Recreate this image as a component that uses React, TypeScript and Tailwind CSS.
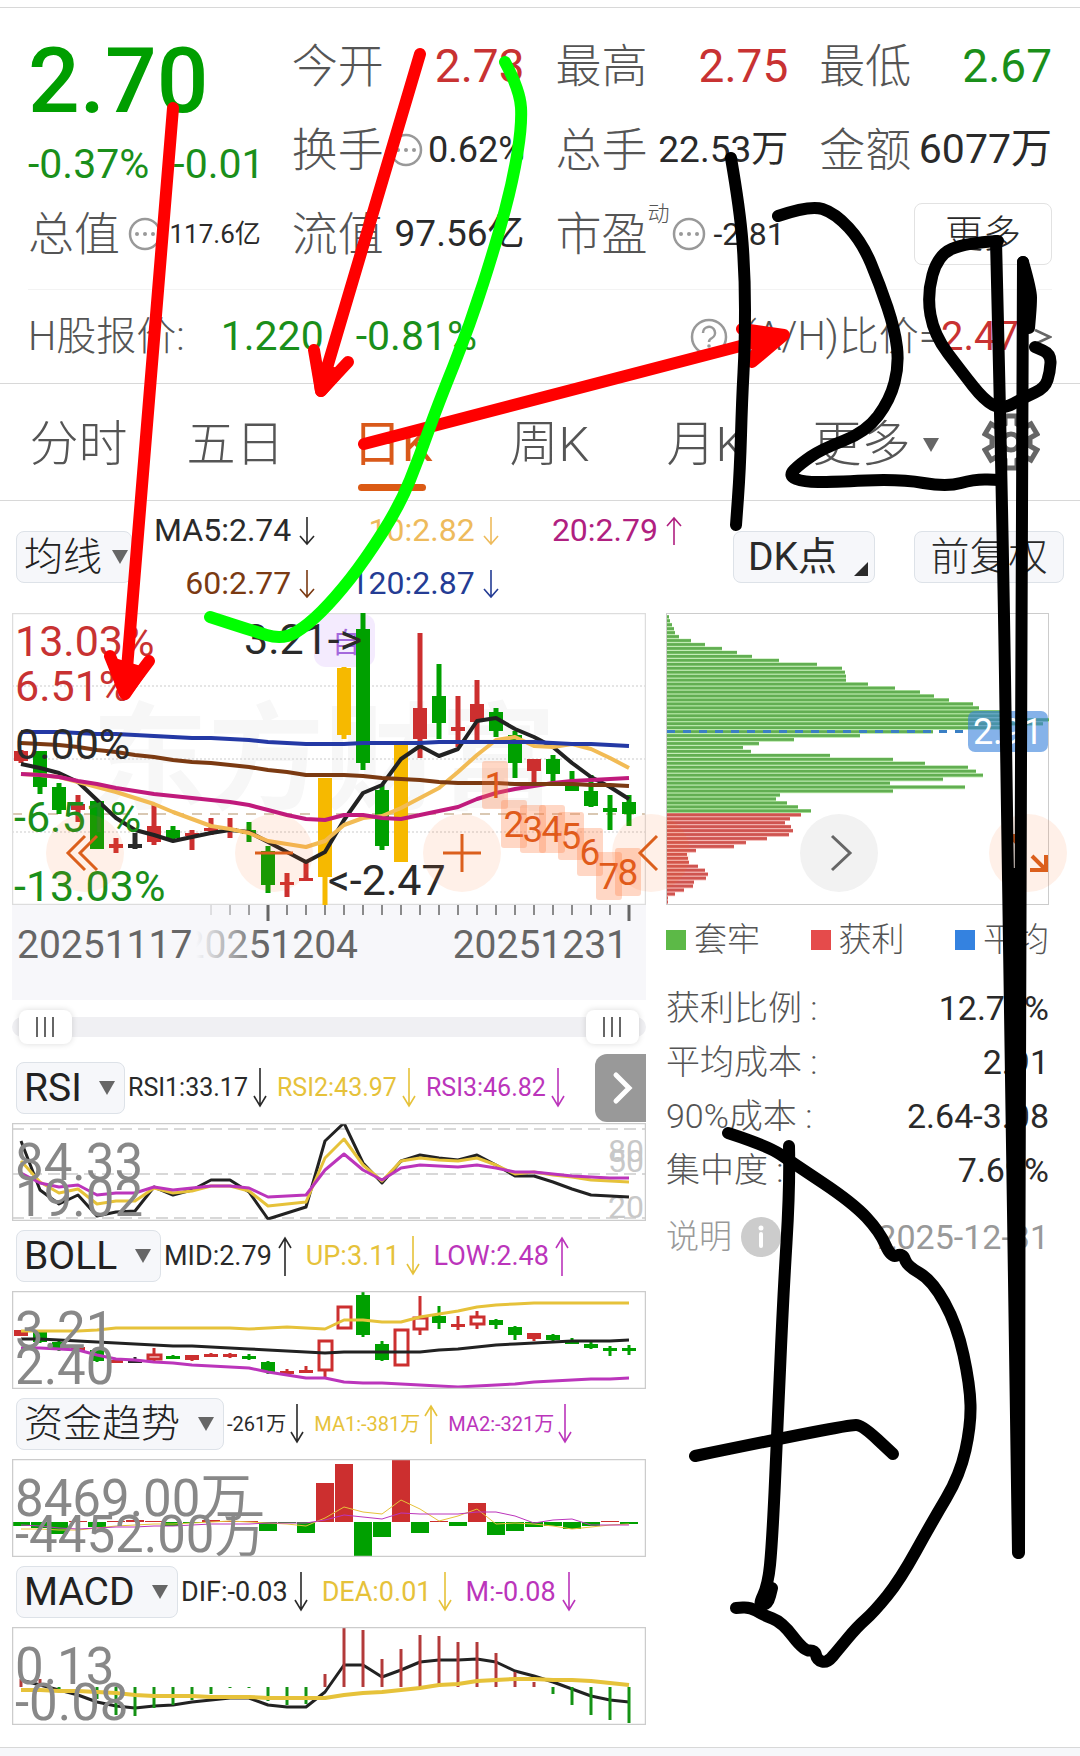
import React, { useState } from "react";

type Candle = [string, number, number, number, number];
type Point = [number, number];

const RED = "#cc2f2f";
const GREEN = "#00a000";
const GOLD = "#f6b900";
const INK = "#2a2a2a";
const YELLOW = "#e6c23a";
const PURPLE = "#bb35bb";

// every chart shares the same 33 trading days, 19px apart
const dayX = (i: number) => 9 + i * 19;

const linePoints = (ys: number[]) => ys.map((y, i) => `${dayX(i)},${y}`).join(" ");

// quadratic curve through the midpoints of the given points
const smoothPath = (pts: Point[]) => {
  let d = `M${pts[0][0]} ${pts[0][1]}`;
  for (let i = 1; i < pts.length - 1; i++) {
    const [x, y] = pts[i];
    const [nx, ny] = pts[i + 1];
    d += ` Q${x} ${y} ${(x + nx) / 2} ${(y + ny) / 2}`;
  }
  const last = pts[pts.length - 1];
  return `${d} L${last[0]} ${last[1]}`;
};

// [color, high, body top, body bottom, low]
const dayCandles: Candle[] = [
  [RED, 137, 138, 148, 150],
  [GREEN, 138, 138, 174, 181],
  [GREEN, 170, 174, 197, 201],
  [RED, 182, 191, 197, 209],
  [GREEN, 187, 188, 236, 236],
  [RED, 225, 231, 235, 240],
  [INK, 220, 231, 235, 236],
  [RED, 192, 213, 229, 232],
  [GREEN, 213, 217, 225, 226],
  [RED, 217, 220, 223, 237],
  [RED, 205, 215, 217, 222],
  [RED, 205, 215, 217, 225],
  [GREEN, 209, 217, 221, 229],
  [GREEN, 233, 238, 272, 280],
  [RED, 260, 269, 272, 284],
  [RED, 249, 265, 268, 268],
  [GOLD, 165, 165, 264, 292],
  [GOLD, 54, 55, 122, 126],
  [GREEN, 0, 16, 150, 157],
  [GREEN, 172, 177, 233, 237],
  [GOLD, 132, 132, 249, 249],
  [RED, 20, 95, 126, 145],
  [GREEN, 51, 83, 110, 126],
  [RED, 83, 114, 118, 134],
  [RED, 67, 91, 109, 127],
  [GREEN, 95, 99, 118, 124],
  [GREEN, 118, 122, 150, 165],
  [RED, 146, 146, 158, 169],
  [GREEN, 142, 146, 161, 169],
  [GREEN, 158, 170, 178, 178],
  [GREEN, 162, 178, 193, 194],
  [GREEN, 182, 195, 199, 217],
  [GREEN, 182, 189, 201, 213],
];

const ma5 = [151, 155, 160, 169, 187, 205, 217, 222, 228, 224, 220, 217, 219, 229, 239, 249, 239, 207, 180, 172, 146, 133, 143, 136, 108, 105, 116, 124, 134, 150, 164, 174, 186];
const ma10 = [161, 162, 164, 169, 174, 179, 185, 191, 199, 206, 213, 216, 220, 228, 231, 234, 228, 212, 205, 203, 195, 185, 175, 159, 142, 127, 124, 133, 134, 131, 136, 145, 155];
const ma20 = [161, 162, 164, 168, 171, 175, 178, 181, 183, 185, 187, 189, 192, 197, 202, 206, 207, 202, 202, 205, 206, 202, 198, 194, 186, 180, 176, 173, 170, 168, 167, 166, 165];
const ma60 = [130, 131, 132, 134, 137, 139, 142, 144, 147, 149, 150, 152, 154, 157, 159, 162, 162, 162, 163, 165, 166, 167, 169, 170, 170, 170, 171, 171, 171, 171, 172, 172, 173];
const ma120 = [119, 119, 119, 120, 121, 121, 122, 123, 124, 125, 125, 126, 127, 129, 130, 131, 131, 131, 130, 130, 130, 130, 129, 129, 129, 129, 129, 129, 130, 131, 131, 132, 133];

const countMarks = [148, 187, 192, 192, 199, 215, 239, 235];

const rsi1 = [18, 67, 81, 72, 93, 89, 88, 64, 72, 67, 57, 57, 69, 96, 90, 84, 18, 0, 40, 60, 38, 32, 35, 37, 32, 42, 53, 53, 59, 66, 72, 73, 74];
const rsi2 = [38, 59, 70, 66, 81, 78, 78, 65, 70, 68, 63, 63, 68, 83, 81, 79, 35, 16, 42, 58, 38, 35, 37, 38, 35, 42, 51, 49, 52, 54, 57, 58, 59];
const rsi3 = [50, 60, 64, 62, 72, 70, 70, 64, 67, 65, 63, 63, 65, 74, 73, 72, 47, 31, 47, 57, 45, 42, 43, 44, 42, 45, 49, 49, 51, 53, 54, 55, 55];

const bollCandles: Candle[] = [
  [RED, 39, 39, 45, 45],
  [GREEN, 41, 41, 51, 52],
  [GREEN, 50, 51, 58, 60],
  [RED, 54, 56, 60, 61],
  [GREEN, 59, 59, 70, 71],
  [RED, 67, 69, 71, 72],
  [INK, 66, 69, 71, 72],
  [RED, 57, 63, 69, 70],
  [GREEN, 64, 65, 67, 68],
  [RED, 64, 64, 69, 70],
  [RED, 62, 63, 66, 66],
  [RED, 62, 63, 66, 67],
  [GREEN, 63, 65, 67, 69],
  [GREEN, 70, 71, 81, 83],
  [RED, 78, 80, 83, 85],
  [RED, 75, 79, 82, 82],
  [RED, 49, 49, 80, 86],
  [RED, 15, 15, 38, 38],
  [GREEN, 0, 4, 44, 46],
  [GREEN, 50, 53, 69, 70],
  [RED, 38, 38, 75, 75],
  [RED, 5, 26, 39, 44],
  [GREEN, 15, 25, 32, 38],
  [RED, 25, 33, 36, 39],
  [RED, 20, 25, 34, 38],
  [GREEN, 28, 29, 34, 38],
  [GREEN, 35, 36, 44, 49],
  [RED, 42, 42, 48, 50],
  [GREEN, 43, 44, 49, 50],
  [GREEN, 47, 50, 52, 53],
  [GREEN, 49, 53, 57, 58],
  [GREEN, 55, 57, 60, 65],
  [GREEN, 54, 57, 60, 64],
];
const hollowDays = [7, 16, 17, 20, 21, 24];
const bollUp = [40, 40, 40, 40, 39, 37, 37, 37, 37, 37, 37, 37, 38, 37, 36, 37, 38, 29, 29, 31, 31, 26, 23, 20, 16, 14, 13, 12, 12, 12, 12, 12, 12];
const bollMid = [48, 48, 49, 50, 51, 52, 53, 54, 55, 55, 56, 57, 58, 59, 60, 61, 62, 61, 61, 61, 61, 61, 59, 58, 56, 54, 53, 52, 51, 50, 50, 50, 49];
const bollLow = [57, 57, 58, 59, 64, 68, 69, 71, 72, 74, 75, 76, 77, 81, 84, 87, 87, 91, 92, 92, 93, 94, 95, 96, 95, 94, 93, 91, 90, 89, 88, 88, 87];

const funds = [-4, -6, -12, 1, -5, 1, 2, 1, -4, -1, 2, 1, 1, -9, -1, -11, 39, 58, -34, -15, 63, -11, 1, -4, 19, -13, -9, -5, -4, -7, -4, 1, -2];
const fundMa1 = [70, 70, 71, 71, 69, 67, 66, 65, 65, 64, 63, 62, 63, 64, 65, 67, 59, 48, 53, 55, 41, 50, 62, 57, 50, 65, 64, 65, 67, 70, 68, 66, 65];
const fundMa2 = [66, 67, 69, 70, 69, 68, 68, 67, 67, 66, 65, 65, 65, 64, 64, 64, 61, 56, 58, 60, 54, 55, 55, 55, 53, 53, 57, 64, 61, 60, 66, 66, 66];

const macd = [8, 8, -2, -1, -12, -28, -29, -21, -18, -13, -7, -1, -1, -14, -18, -17, 13, 60, 57, 28, 38, 52, 51, 45, 45, 34, 15, 5, -7, -18, -28, -33, -36];
const dif = [53, 58, 63, 68, 75, 79, 81, 79, 78, 75, 73, 71, 71, 78, 80, 80, 65, 38, 38, 50, 43, 35, 33, 33, 32, 35, 44, 49, 55, 62, 69, 73, 75];
const dea = [63, 63, 64, 64, 65, 66, 68, 69, 69, 69, 70, 70, 70, 71, 71, 71, 71, 68, 66, 65, 63, 61, 58, 57, 54, 53, 52, 52, 53, 53, 54, 56, 58];

const lossChips = [2, 3, 5, 7, 8, 12, 24, 38, 55, 70, 85, 112, 150, 175, 178, 179, 179, 201, 228, 253, 267, 282, 306, 312, 333, 342, 382, 376, 344, 266, 193, 127, 92, 76, 84, 163, 226, 258, 301, 309, 316, 276, 223, 298, 226, 113, 109, 120, 131, 144];
const gainChips = [134, 123, 118, 124, 126, 122, 100, 79, 67, 29, 20, 21, 22, 31, 38, 41, 39, 27, 26, 17, 8, 1, 1];

const inkStrokes: Point[][] = [
  [[731, 158], [740, 210], [745, 275], [745, 345], [742, 400], [740, 470], [736, 525]],
  [[778, 216], [810, 205], [835, 213], [862, 242], [880, 285], [895, 330], [899, 365], [890, 400], [866, 432], [822, 449], [800, 464], [788, 476], [804, 482], [832, 482], [900, 479], [947, 487], [975, 479], [1000, 480]],
  [[998, 241], [965, 243], [938, 255], [927, 295], [934, 335], [962, 372], [984, 400], [1002, 410], [1025, 397], [1045, 388], [1050, 372], [1051, 354], [1035, 347]],
  [[996, 241], [1002, 483], [1008, 870], [1018, 1553]],
  [[1023, 262], [1022, 620], [1020, 900], [1019, 1553]],
  [[1023, 262], [1031, 290], [1031, 305], [1029, 328]],
  [[728, 1133], [768, 1146], [793, 1163], [853, 1203], [880, 1232], [891, 1258], [903, 1253], [907, 1266], [932, 1280], [957, 1325], [970, 1385], [971, 1425], [960, 1475], [932, 1522], [900, 1580], [874, 1612], [857, 1627], [838, 1650], [827, 1663], [817, 1660], [815, 1650], [804, 1651], [782, 1622], [763, 1615], [750, 1607], [736, 1608]],
  [[789, 1146], [790, 1185], [783, 1300], [777, 1440], [772, 1545], [768, 1585], [758, 1606], [768, 1604], [772, 1588]],
  [[695, 1456], [773, 1440], [850, 1425], [862, 1425], [893, 1454]],
];

const greenStroke: Point[] = [
  [505, 62], [520, 90], [522, 125], [513, 180], [497, 240], [470, 325], [437, 407], [420, 455], [400, 505], [365, 560], [335, 598], [308, 625], [283, 640], [250, 630], [210, 617],
];

const Arrow = ({ up, tall }: { up?: boolean; tall?: boolean }) => (
  <svg
    viewBox={tall ? "0 0 14 40" : "0 0 16 30"}
    className={`shrink-0 ${tall ? "w-[14px] h-10" : "w-4 h-[30px]"} ${up ? "rotate-180" : ""}`}
    fill="none"
    stroke="currentColor"
    strokeWidth="1.6"
    aria-hidden="true"
  >
    <path d={tall ? "M7 0V38M1 28L7 38L13 28" : "M8 1V28M1 20L8 28L15 20"} />
  </svg>
);

const MoreDots = () => (
  <svg viewBox="0 0 34 34" className="size-[34px] shrink-0" aria-hidden="true">
    <circle cx="17" cy="17" r="15" fill="none" stroke="#999" strokeWidth="2.5" />
    <circle cx="9" cy="17" r="2" fill="#999" />
    <circle cx="17" cy="17" r="2" fill="#999" />
    <circle cx="25" cy="17" r="2" fill="#999" />
  </svg>
);

const Triangle = () => (
  <svg viewBox="0 0 16 14" className="w-4 h-[14px]" aria-hidden="true">
    <path d="M0 0H16L8 14Z" fill="#666" />
  </svg>
);

const Stat = ({ label, children }: { label: string; children: React.ReactNode }) => (
  <div className="flex items-center justify-between whitespace-nowrap">
    <span className="text-[46px] font-light text-[#555]">{label}</span>
    {children}
  </div>
);

const Picker = ({ name, tight, light }: { name: string; tight?: boolean; light?: boolean }) => (
  <div className="relative shrink-0">
    <select
      aria-label={name}
      className={`appearance-none h-[52px] pl-[7px] rounded-lg border border-[#dde2e8] bg-[#f6f7fa] text-[39px] leading-[48px] text-[#222] ${light ? "font-light" : ""} ${tight ? "pr-7" : "pr-[42px]"}`}
    >
      <option>{name}</option>
    </select>
    <span className={`absolute top-[19px] pointer-events-none ${tight ? "right-1" : "right-[10px]"}`}>
      <Triangle />
    </span>
  </div>
);

const Frame = ({ height, stroke }: { height: number; stroke: string }) => (
  <rect x="0.5" y="0.5" width="633" height={height - 1} fill="none" stroke={stroke} strokeWidth="1.5" />
);

const Line = ({ ys, color, width = 3 }: { ys: number[]; color: string; width?: number }) => (
  <polyline points={linePoints(ys)} fill="none" stroke={color} strokeWidth={width} strokeLinejoin="round" />
);

const Candles = ({ data, wick, hollow = [] }: { data: Candle[]; wick: number; hollow?: number[] }) => (
  <g>
    {data.map(([color, high, top, bottom, low], i) => (
      <g key={i} stroke={color}>
        <path d={`M${dayX(i)} ${high}V${hollow.includes(i) ? top : low}M${dayX(i)} ${bottom}V${low}`} strokeWidth={wick} />
        {hollow.includes(i) ? (
          <rect x={dayX(i) - 6} y={top + 1} width="13" height={bottom - top - 2} fill="none" strokeWidth="3" />
        ) : (
          <rect x={dayX(i) - 7} y={top} width="14" height={Math.max(bottom - top, 3)} fill={color} stroke="none" />
        )}
      </g>
    ))}
  </g>
);

const RangeLabels = ({ top, bottom }: { top: string; bottom: string }) => (
  <g fontSize="51" fill="#888">
    <text x="3" y="57">{top}</text>
    <text x="3" y="93">{bottom}</text>
  </g>
);

const PriceChart = () => (
  <svg viewBox="0 0 634 292" className="block w-full" role="img" aria-label="日K">
    <text x="80" y="187" fontSize="116" fontWeight="700" fill="#f7f7f7">东方财富</text>
    <g stroke="#ddd" strokeWidth="1.5" strokeDasharray="2 2">
      <path d="M0 73H634M0 146H634M0 219H634" />
    </g>
    <path d="M0 201H634" stroke="#cdb79a" strokeWidth="1.5" strokeDasharray="10 8" />
    <rect x="302" y="1" width="61" height="53" rx="12" fill="#f4ebfe" />
    <text x="320" y="40" fontSize="28" fill="#a468dc">自</text>
    <Frame height={292} stroke="#ddd" />
    <Candles data={dayCandles} wick={5} />
    <Line ys={ma5} color="#222" width={4} />
    <Line ys={ma10} color="#f2bb55" width={4} />
    <Line ys={ma20} color="#c01a7c" width={4} />
    <Line ys={ma60} color="#7b3a12" width={4} />
    <Line ys={ma120} color="#2439a5" width={4} />
    <g fontSize="43">
      <text x="3" y="43" fill="#c83232">13.03%</text>
      <text x="3" y="88" fill="#c83232">6.51%</text>
      <text x="3" y="146" fill={INK}>0.00%</text>
      <text x="2" y="219" fill="#1a8f1a">-6.51%</text>
      <text x="2" y="288" fill="#1a8f1a">-13.03%</text>
      <text x="232" y="41" fill={INK}>3.21-&gt;</text>
      <text x="316" y="282" fill={INK}>&lt;-2.47</text>
    </g>
    {countMarks.map((y, i) => (
      <g key={i}>
        <rect x={470 + i * 19} y={y} width="26" height="48" rx="3" fill="#ff7a40" fillOpacity="0.3" />
        <text x={483 + i * 19} y={y + 37} fontSize="37" textAnchor="middle" fill="#e05a1a">{i + 1}</text>
      </g>
    ))}
  </svg>
);

const DateAxis = () => (
  <svg viewBox="0 0 634 95" className="block w-full" role="img" aria-label="日期">
    <defs>
      <linearGradient id="axisFade">
        <stop offset="0" stopColor="#f7f7fa" />
        <stop offset="1" stopColor="#f7f7fa" stopOpacity="0" />
      </linearGradient>
    </defs>
    <rect width="634" height="95" fill="#f7f7fa" />
    {Array.from({ length: 23 }, (_, k) => {
      const major = k === 3 || k === 22;
      return <path key={k} d={`M${199 + k * 19} 0V${major ? 16 : 10}`} stroke="#666" strokeWidth={major ? 3 : 1.5} />;
    })}
    <g fontSize="39" fill="#666">
      <text x="346" y="53" textAnchor="end">20251204</text>
      <rect x="184" width="66" height="95" fill="url(#axisFade)" />
      <rect x="150" width="34" height="95" fill="#f7f7fa" />
      <text x="5" y="53">20251117</text>
      <text x="616" y="53" textAnchor="end">20251231</text>
    </g>
  </svg>
);

const thumb =
  "absolute inset-x-[7px] inset-y-0 appearance-none bg-transparent pointer-events-none [&::-webkit-slider-thumb]:appearance-none [&::-webkit-slider-thumb]:pointer-events-auto [&::-webkit-slider-thumb]:w-[53px] [&::-webkit-slider-thumb]:h-[34px] [&::-webkit-slider-thumb]:rounded-lg [&::-webkit-slider-thumb]:shadow-[0_0_6px_rgba(0,0,0,0.15)] [&::-webkit-slider-thumb]:[background:linear-gradient(#666,#666)_17px_7px/2px_20px_no-repeat,linear-gradient(#666,#666)_25px_7px/2px_20px_no-repeat,linear-gradient(#666,#666)_33px_7px/2px_20px_no-repeat,#fff]";

const RangeSlider = () => {
  const [from, setFrom] = useState(0);
  const [to, setTo] = useState(100);

  return (
    <div className="relative h-[53px] flex items-center">
      <div className="w-full h-5 rounded-full bg-[#f0f0f3]" />
      <input type="range" aria-label="起始日期" className={thumb} value={from} onChange={(e) => setFrom(Math.min(+e.target.value, to))} />
      <input type="range" aria-label="结束日期" className={thumb} value={to} onChange={(e) => setTo(Math.max(+e.target.value, from))} />
    </div>
  );
};

const sizes = {
  sm: { row: "gap-[10px] text-[20px]", item: "gap-1" },
  md: { row: "gap-[10px] text-[25px]", item: "gap-[5px]" },
  lg: { row: "gap-[14px] text-[27px]", item: "gap-[6px]" },
};

const Indicator = ({
  name,
  values,
  size = "lg",
  light,
  action,
  children,
}: {
  name: string;
  values: { text: string; up?: boolean }[];
  size?: "sm" | "md" | "lg";
  light?: boolean;
  action?: React.ReactNode;
  children: React.ReactNode;
}) => {
  const colors = ["text-[#2a2a2a]", "text-[#e6c23a]", "text-[#bb35bb]"];

  return (
    <section>
      <div className="flex items-center h-[70px] pl-1 whitespace-nowrap">
        <Picker name={name} light={light} />
        <div className={`flex pl-[3px] ${sizes[size].row}`}>
          {values.map((v, i) => (
            <span key={v.text} className={`flex items-center ${sizes[size].item} ${colors[i]}`}>
              {v.text}
              <Arrow up={v.up} tall />
            </span>
          ))}
        </div>
        {action}
      </div>
      <svg viewBox="0 0 634 98" className="block w-full" role="img" aria-label={name}>
        {children}
        <Frame height={98} stroke="#ccc" />
      </svg>
    </section>
  );
};

const ChipChart = () => (
  <svg viewBox="0 0 383 292" className="block w-full" role="img" aria-label="筹码分布">
    <rect x="0.5" y="0.5" width="382" height="291" fill="none" stroke="#ccc" />
    {[...lossChips, ...gainChips].map((w, i) => {
      const loss = i < lossChips.length;
      return (
        <g key={i}>
          <rect x="1" y={2 + i * 3.96} width={w} height="3.96" fill={loss ? "#b2e6a2" : "#f0a8a4"} />
          <rect x="1" y={2.4 + i * 3.96} width={w} height="2.7" fill={loss ? "#62ae52" : "#cf5450"} />
        </g>
      );
    })}
    <path d="M1 118.5H302" stroke="#3a7fc4" strokeWidth="3" strokeDasharray="8 8" />
    <rect x="302" y="98" width="80" height="41" rx="7" fill="#3a82dc" fillOpacity="0.62" />
    <text x="342" y="131" fontSize="36" textAnchor="middle" fill="#fff">2.91</text>
  </svg>
);

const tools = [
  { label: "快退", d: "M39 22L22 39L39 56M51 22L34 39L51 56" },
  { label: "缩小", d: "M20 39H58" },
  { label: "放大", d: "M20 39H58M39 20V58" },
  { label: "左移", d: "M45 22L28 39L45 56" },
  { label: "右移", d: "M32 22L50 39L32 56", gray: true },
  { label: "全屏", d: "M43 42L57 56M41 56H57V41M35 36L21 22M37 22H21V37", bold: true },
];

const Toolbar = () => (
  <div className="absolute top-[201px] left-[46px] right-[13px] flex justify-between">
    {tools.map((t) => (
      <button
        key={t.label}
        aria-label={t.label}
        className={`size-[78px] rounded-full ${t.gray ? "bg-[#f2f2f2] text-[#666]" : "bg-[#ff7020]/10 text-[#db5f1c]"}`}
      >
        <svg viewBox="0 0 78 78" fill="none" stroke="currentColor" strokeWidth={t.bold ? 4 : 3}>
          <path d={t.d} />
        </svg>
      </button>
    ))}
  </div>
);

const Header = () => (
  <header className="border-t border-[#d8d8d8] px-7 pt-4">
    <div className="grid grid-cols-4 grid-rows-[84px_84px_84px] gap-x-[31px] pb-[13px] border-b border-[#f3f3f3] text-[#2a2a2a]">
      <div className="row-span-2 flex flex-col text-[#009e00]">
        <strong className="text-[91px] leading-[114px] font-medium">2.70</strong>
        <div className="flex gap-6 text-[41px] leading-[52px] text-[#1a8f1a]">
          <span>-0.37%</span>
          <span>-0.01</span>
        </div>
      </div>
      <Stat label="今开"><span className="text-[46px] text-[#c83232]">2.73</span></Stat>
      <Stat label="最高"><span className="text-[46px] text-[#c83232]">2.75</span></Stat>
      <Stat label="最低"><span className="text-[46px] text-[#1a8f1a]">2.67</span></Stat>
      <Stat label="换手">
        <MoreDots />
        <span className="text-[36px]">0.62%</span>
      </Stat>
      <Stat label="总手"><span className="text-[37px]">22.53万</span></Stat>
      <Stat label="金额"><span className="text-[41px]">6077万</span></Stat>
      <Stat label="总值">
        <MoreDots />
        <span className="text-[26px]">117.6亿</span>
      </Stat>
      <Stat label="流值"><span className="text-[37px]">97.56亿</span></Stat>
      <div className="flex items-center whitespace-nowrap">
        <span className="text-[46px] font-light text-[#555]">市盈</span>
        <sup className="self-start pt-[10px] text-[22px] leading-6 top-0 font-light text-[#555]">动</sup>
        <span className="pl-[2px]"><MoreDots /></span>
        <span className="pl-2 text-[32px]">-2.81</span>
      </div>
      <button className="self-center justify-self-end w-[138px] h-[62px] rounded-lg border border-[#e2e2e2] text-[38px] leading-[56px] font-light">
        更多
      </button>
    </div>
    <div className="flex items-center h-[93px] text-[40px] text-[#555] whitespace-nowrap">
      <span className="font-light">H股报价:</span>
      <span className="pl-9 text-[41px] text-[#1a8f1a]">1.220</span>
      <span className="pl-8 text-[41px] text-[#1a8f1a]">-0.81%</span>
      <a href="#ratio" className="ml-auto flex items-center font-light">
        <svg viewBox="0 0 38 38" className="size-[38px] mr-4" aria-hidden="true">
          <circle cx="19" cy="19" r="17" fill="none" stroke="#999" strokeWidth="2.5" />
          <path d="M13 15a6 6 0 1 1 9 5c-2 1-3 2-3 4" fill="none" stroke="#999" strokeWidth="2.5" />
          <circle cx="19" cy="28" r="1.8" fill="#999" />
        </svg>
        (A/H)比价=
        <span className="font-normal text-[#c83232]">2.47</span>
        <svg viewBox="0 0 18 18" className="w-[18px] ml-[15px]" fill="none" stroke="#666" strokeWidth="2.5" aria-hidden="true">
          <path d="M1 2L16 9L1 16" />
        </svg>
      </a>
    </div>
  </header>
);

const Tabs = () => {
  const [active, setActive] = useState("日K");

  return (
    <nav className="flex items-center h-[118px] border-y border-[#d8d8d8] text-[49px] font-light text-[#555]">
      {["分时", "五日", "日K", "周K", "月K"].map((tab) => (
        <button key={tab} onClick={() => setActive(tab)} className="relative w-[157px] h-full pt-[6px]">
          <span className={tab === active ? "text-[#d9591a] font-normal" : ""}>{tab}</span>
          {tab === active && (
            <span className="absolute bottom-[9px] left-[44px] w-[68px] h-[7px] rounded-full bg-[#db5a14]" />
          )}
        </button>
      ))}
      <button className="flex-1 h-full flex items-center justify-center gap-3 pt-[6px] pr-4">
        更多
        <Triangle />
      </button>
      <button aria-label="设置" className="mr-10">
        <svg viewBox="0 0 58 58" className="size-[58px]" fill="none" stroke="#666" strokeWidth="5" aria-hidden="true">
          <path d="M23 3H35V11L42 15L49 11L55 21L48 25V33L55 37L49 47L42 43L35 47V55H23V47L16 43L9 47L3 37L10 33V25L3 21L9 11L16 15L23 11Z" />
          <circle cx="29" cy="29" r="8" />
        </svg>
      </button>
    </nav>
  );
};

const averages = [
  { text: "MA5:2.74", color: "text-[#2a2a2a]" },
  { text: "10:2.82", color: "text-[#eebb5c]" },
  { text: "20:2.79", color: "text-[#b02080]", up: true },
  { text: "60:2.77", color: "text-[#7b3a12]" },
  { text: "120:2.87", color: "text-[#243c94]" },
];

const Averages = () => (
  <div className="flex items-center h-28 px-4 text-[#2a2a2a]">
    <Picker name="均线" tight light />
    <div className="grid grid-cols-3 flex-1 text-[32px] leading-[53px]">
      {averages.map((a) => (
        <span key={a.text} className={`flex items-center justify-end gap-2 ${a.color}`}>
          {a.text}
          <Arrow up={a.up} />
        </span>
      ))}
    </div>
    <button className="relative ml-[51px] w-[142px] h-[52px] pl-[14px] text-left rounded-lg border border-[#dde2e8] bg-[#f6f7fa] text-[39px] leading-[48px]">
      DK点
      <svg viewBox="0 0 14 14" className="absolute right-[6px] bottom-[6px] w-[14px]" aria-hidden="true">
        <path d="M14 0V14H0Z" fill="#2a2a2a" />
      </svg>
    </button>
    <button className="ml-[39px] w-[150px] h-[52px] rounded-lg border border-[#dde2e8] bg-[#f6f7fa] text-[39px] leading-[48px] font-light">
      前复权
    </button>
  </div>
);

const chipStats = [
  ["获利比例 :", "12.78%"],
  ["平均成本 :", "2.91"],
  ["90%成本 :", "2.64-3.08"],
  ["集中度 :", "7.69%"],
];

const ChipPanel = () => (
  <aside className="text-[34px] text-[#2a2a2a]">
    <ChipChart />
    <div className="flex justify-between pt-2 text-[33px] leading-[54px] font-light text-[#555]">
      <span className="flex items-center gap-2"><i className="size-5 bg-[#5cb947]" />套牢</span>
      <span className="flex items-center gap-2"><i className="size-5 bg-[#e54b4b]" />获利</span>
      <span className="flex items-center gap-2"><i className="size-5 bg-[#3482e0]" />平均</span>
    </div>
    <table className="w-full mt-[14px] leading-[54px]">
      <tbody>
        {chipStats.map(([label, value]) => (
          <tr key={label}>
            <th className="p-0 text-left font-light text-[#555]">{label}</th>
            <td className="p-0 text-right">{value}</td>
          </tr>
        ))}
      </tbody>
    </table>
    <div className="flex items-center mt-[13px] leading-[54px] text-[#999]">
      <span className="text-[33px] font-light">说明</span>
      <svg viewBox="0 0 40 40" className="size-10 ml-[9px]" aria-hidden="true">
        <circle cx="20" cy="20" r="20" fill="#ccc" />
        <path d="M20 17V29" stroke="#fff" strokeWidth="4" strokeLinecap="round" />
        <circle cx="20" cy="11" r="2.5" fill="#fff" />
      </svg>
      <time className="ml-auto">2025-12-31</time>
    </div>
  </aside>
);

// freehand marks drawn over the whole page
const Doodles = () => (
  <svg
    viewBox="0 0 1080 1756"
    className="absolute top-0 left-0 w-full pointer-events-none"
    fill="none"
    strokeWidth="12"
    strokeLinecap="round"
    strokeLinejoin="round"
    aria-hidden="true"
  >
    <g stroke="#f00">
      <path d="M173 108L125 693M110 656L125 693L149 661" />
      <path d="M420 54L321 388M314 350L321 391L348 362" />
      <path d="M364 444L775 337" />
      <path d="M742 329L784 335L752 362L762 342Z" fill="#f00" />
      <path d="M114 664L125 694L140 672ZM318 368L321 391L336 374Z" fill="#f00" />
    </g>
    <path d={smoothPath(greenStroke)} stroke="#0f0" />
    {inkStrokes.map((pts, i) => (
      <path key={i} d={smoothPath(pts)} stroke="#000" />
    ))}
    <path d="M1022 275L1028 300L1026 325L1022 330Z" fill="#000" stroke="#000" strokeWidth="4" />
    <path d="M1009 870L1018 870L1020 1400L1015 1400Z" fill="#000" stroke="#000" strokeWidth="4" />
  </svg>
);

export default function App() {
  return (
    <div className="relative w-full bg-white pt-[7px] font-[Roboto,'Noto_Sans_CJK_SC',sans-serif]">
      <Header />
      <Tabs />
      <Averages />
      <main className="relative grid grid-cols-[634fr_383fr] gap-5 pl-3 pr-[31px] pb-[22px]">
        <div>
          <PriceChart />
          <DateAxis />
          <RangeSlider />
          <Indicator
            name="RSI"
            size="md"
            values={[{ text: "RSI1:33.17" }, { text: "RSI2:43.97" }, { text: "RSI3:46.82" }]}
            action={
              <button aria-label="展开" className="ml-auto w-[51px] h-[68px] rounded-l-xl bg-[#999]">
                <svg viewBox="0 0 51 68" fill="none" stroke="#fff" strokeWidth="5" strokeLinecap="round">
                  <path d="M21 21L34 34L21 47" />
                </svg>
              </button>
            }
          >
            <path d="M0 6H634M0 51H634M0 95H634" stroke="#ccc" strokeWidth="1.5" strokeDasharray="12 6" />
            <g fontSize="32" fill="#c8c8c8" textAnchor="end">
              <text x="632" y="39">80</text>
              <text x="632" y="49">50</text>
              <text x="632" y="95">20</text>
            </g>
            <Line ys={rsi1} color="#222" />
            <Line ys={rsi2} color={YELLOW} />
            <Line ys={rsi3} color={PURPLE} />
            <RangeLabels top="84.33" bottom="19.02" />
          </Indicator>
          <Indicator
            name="BOLL"
            values={[{ text: "MID:2.79", up: true }, { text: "UP:3.11" }, { text: "LOW:2.48", up: true }]}
          >
            <Candles data={bollCandles} wick={3} hollow={hollowDays} />
            <Line ys={bollMid} color="#222" />
            <Line ys={bollUp} color={YELLOW} />
            <Line ys={bollLow} color={PURPLE} />
            <RangeLabels top="3.21" bottom="2.40" />
          </Indicator>
          <Indicator
            name="资金趋势"
            size="sm"
            light
            values={[{ text: "-261万" }, { text: "MA1:-381万", up: true }, { text: "MA2:-321万" }]}
          >
            {funds.map((v, i) => (
              <rect key={i} x={dayX(i) - 9} y={v > 0 ? 63 - v : 63} width="18" height={Math.abs(v)} fill={v > 0 ? RED : GREEN} />
            ))}
            <Line ys={fundMa1} color={YELLOW} width={1} />
            <Line ys={fundMa2} color={PURPLE} width={1} />
            <RangeLabels top="8469.00万" bottom="-4452.00万" />
          </Indicator>
          <Indicator name="MACD" values={[{ text: "DIF:-0.03" }, { text: "DEA:0.01" }, { text: "M:-0.08" }]}>
            <Line ys={dif} color="#222" />
            {macd.map((v, i) => (
              <path key={i} d={`M${dayX(i)} 60V${60 - v}`} stroke={v > 0 ? "#b33a3a" : "#149214"} strokeWidth="3" />
            ))}
            <Line ys={dea} color={YELLOW} width={4} />
            <RangeLabels top="0.13" bottom="-0.08" />
          </Indicator>
        </div>
        <ChipPanel />
        <Toolbar />
      </main>
      <footer className="h-[9px] border-t border-[#d8d8d8] bg-[#f6f7fa]" />
      <Doodles />
    </div>
  );
}
